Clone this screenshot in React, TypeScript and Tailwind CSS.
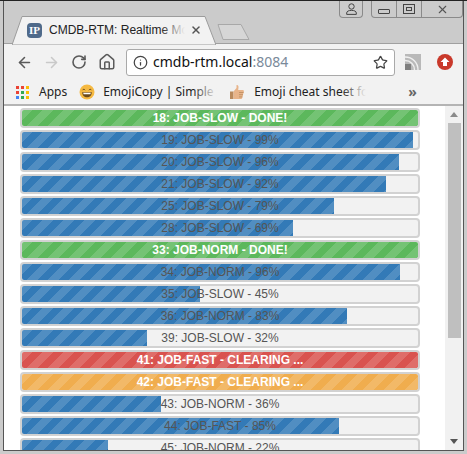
import { ArrowLeft, ArrowRight, House, Info, RotateCw, Star, X } from 'lucide-react'

type Job = {
  label: string
  width: number
  tone: 'blue' | 'green' | 'red' | 'orange'
}

const jobs: Job[] = [
  { label: '18: JOB-SLOW - DONE!', width: 396, tone: 'green' },
  { label: '19: JOB-SLOW - 99%', width: 391, tone: 'blue' },
  { label: '20: JOB-SLOW - 96%', width: 377, tone: 'blue' },
  { label: '21: JOB-SLOW - 92%', width: 364, tone: 'blue' },
  { label: '25: JOB-SLOW - 79%', width: 312, tone: 'blue' },
  { label: '28: JOB-SLOW - 69%', width: 271, tone: 'blue' },
  { label: '33: JOB-NORM - DONE!', width: 396, tone: 'green' },
  { label: '34: JOB-NORM - 96%', width: 378, tone: 'blue' },
  { label: '35: JOB-SLOW - 45%', width: 178, tone: 'blue' },
  { label: '36: JOB-NORM - 83%', width: 325, tone: 'blue' },
  { label: '39: JOB-SLOW - 32%', width: 125, tone: 'blue' },
  { label: '41: JOB-FAST - CLEARING ...', width: 396, tone: 'red' },
  { label: '42: JOB-FAST - CLEARING ...', width: 396, tone: 'orange' },
  { label: '43: JOB-NORM - 36%', width: 139, tone: 'blue' },
  { label: '44: JOB-FAST - 85%', width: 317, tone: 'blue' },
  { label: '45: JOB-NORM - 22%', width: 86, tone: 'blue' },
]

const toneClass = {
  blue: 'bg-[#337ab7]',
  green: 'bg-[#5cb85c]',
  red: 'bg-[#d9534f]',
  orange: 'bg-[#f0ad4e]',
}

function JobRow({ job }: { job: Job }) {
  const done = job.tone !== 'blue'
  return (
    <div className="relative h-5 w-[400px] shrink-0 overflow-hidden rounded border-2 border-[#d2d2d2] bg-[#f2f2f2]">
      <div
        className={`h-full bg-[linear-gradient(135deg,rgba(255,255,255,.15)_25%,transparent_25%,transparent_50%,rgba(255,255,255,.15)_50%,rgba(255,255,255,.15)_75%,transparent_75%,transparent)] bg-[length:21px_21px] ${toneClass[job.tone]}`}
        style={{ width: job.width }}
      />
      <span
        className={`absolute inset-0 flex items-center justify-center text-xs leading-none ${done ? 'font-bold text-white' : 'text-[#555]'}`}
      >
        {job.label}
      </span>
    </div>
  )
}

function Favicon() {
  return (
    <span className="flex h-[15px] w-[15px] items-center justify-center rounded-sm bg-[#4f6a8a] font-['Liberation_Serif',serif] text-[11px] leading-none font-bold text-white">
      IP
    </span>
  )
}

function AppsIcon() {
  const colors = ['#ea4335', '#ea4335', '#fbbc05', '#ea4335', '#34a853', '#fbbc05', '#4285f4', '#34a853', '#fbbc05']
  return (
    <svg width="13" height="13" viewBox="0 0 13 13">
      {colors.map((c, i) => (
        <rect key={i} x={(i % 3) * 5} y={Math.floor(i / 3) * 5} width="3" height="3" fill={c} />
      ))}
    </svg>
  )
}

function GrinIcon() {
  return (
    <svg width="16" height="16" viewBox="0 0 16 16">
      <circle cx="8" cy="8" r="7.5" fill="#f5b942" />
      <path d="M3.5 6.2c.6-1.2 2-1.2 2.6 0M9.9 6.2c.6-1.2 2-1.2 2.6 0" fill="none" stroke="#6b4a1c" strokeWidth="1" />
      <path d="M3.2 8.2h9.6c0 3-2 5-4.8 5s-4.8-2-4.8-5z" fill="#6b4a1c" />
      <path d="M4.2 8.8h7.6l-.4 1.4H4.6z" fill="#fff" />
    </svg>
  )
}

function ThumbIcon() {
  return (
    <svg width="16" height="16" viewBox="0 0 16 16">
      <path d="M1 7.5h3.5V15H1z" fill="#b98a5e" />
      <path d="M4.5 7.5 7.5 4V1.2c1.4-.4 2.2.8 2 2.2L9.2 6h4.6c1 0 1.4 1 1 1.8l-1.5 6c-.2.8-.8 1.2-1.6 1.2H4.5z" fill="#e8b48a" />
      <path d="M10 8.5h4.6M10 10.7h4M10 12.9h3.3" stroke="#b98a5e" strokeWidth="0.8" />
    </svg>
  )
}

function CastIcon() {
  return (
    <svg width="16" height="16" viewBox="0 0 16 16">
      <rect width="16" height="16" fill="#b9b9b9" />
      <rect x="0" y="10" width="6" height="6" fill="#808080" />
      <path d="M0 6.5c5.5 0 9.5 4 9.5 9.5M0 3c7.5 0 13 5.5 13 13" fill="none" stroke="#efefef" strokeWidth="1.4" />
    </svg>
  )
}

function UpdateIcon() {
  return (
    <svg width="16" height="16" viewBox="0 0 16 16">
      <circle cx="8" cy="8" r="8" fill="#c9392b" />
      <path d="M8 3.5 12.5 8H10v4H6V8H3.5z" fill="#fff" />
    </svg>
  )
}

function Tabstrip() {
  return (
    <div className="flex h-[43px] shrink-0 items-start justify-between border-b border-[#a0a0a0] pl-[8px]">
      <div className="flex items-end">
        <div className="relative mt-[15px] h-[28px] w-[204px]">
          <svg className="absolute inset-0" width="204" height="29" viewBox="0 0 204 29">
            <path d="M0 29 10 .5H193L204 29Z" fill="#f2f2f2" stroke="#9c9c9c" />
          </svg>
          <div className="relative flex h-full items-center pl-[15px]">
            <Favicon />
            <div className="relative ml-[7px] w-[136px] overflow-hidden text-xs whitespace-nowrap text-[#222]">
              CMDB-RTM: Realtime Monitor
              <span className="absolute inset-y-0 right-0 w-6 bg-linear-to-r from-transparent to-[#f2f2f2]" />
            </div>
            <X size={12} strokeWidth={3} className="ml-[5px] text-[#555]" />
          </div>
        </div>
        <svg className="-ml-px mb-[4px]" width="36" height="16" viewBox="0 0 36 16">
          <path d="M3 .5H26L34 15.5H8Z" fill="#d6d6d6" stroke="#a8a8a8" />
        </svg>
      </div>
      <div className="flex items-start gap-[8px] text-[#555]">
        <div className="flex h-[17px] w-[24px] items-center justify-center rounded-b border border-t-0 border-[#8a8a8a]">
          <svg width="11" height="12" viewBox="0 0 11 12">
            <circle cx="5.5" cy="3.5" r="2.7" fill="none" stroke="#444" />
            <path d="M.7 11.4V10c0-1.8 2-2.6 4.8-2.6s4.8.8 4.8 2.6v1.4Z" fill="none" stroke="#444" />
          </svg>
        </div>
        <div className="flex h-[17px] w-[92px] rounded-b border border-t-0 border-[#8a8a8a]">
          <div className="flex w-[25px] items-center justify-center border-r border-[#8a8a8a]">
            <span className="mt-[5px] h-[5px] w-[12px] rounded-[1px] border border-[#444]" />
          </div>
          <div className="flex w-[25px] items-center justify-center border-r border-[#8a8a8a]">
            <span className="flex h-[10px] w-[12px] items-center justify-center border border-[#444]">
              <span className="h-[4px] w-[6px] border border-[#444]" />
            </span>
          </div>
          <div className="flex flex-1 items-center justify-center">
            <X size={13} strokeWidth={2} className="text-[#555]" />
          </div>
        </div>
      </div>
    </div>
  )
}

function Toolbar() {
  return (
    <div className="flex h-[36px] shrink-0 items-center bg-[#f2f2f2] pl-[12px]">
      <ArrowLeft size={17} strokeWidth={2.2} className="text-[#5a5a5a]" />
      <ArrowRight size={17} strokeWidth={2.2} className="ml-[10px] text-[#c9c9c9]" />
      <RotateCw size={16} strokeWidth={2.4} className="ml-[11px] text-[#5a5a5a]" />
      <House size={18} strokeWidth={2} className="ml-[11px] text-[#5a5a5a]" />
      <div className="ml-[10px] flex h-[27px] w-[269px] items-center rounded-[3px] border border-[#a9a9a9] bg-white pr-[6px] pl-[6px] text-sm">
        <Info size={15} strokeWidth={2} className="text-[#444]" />
        <span className="ml-[5px] text-[#111]">cmdb-rtm.local</span>
        <span className="text-[#7a8a9a]">:8084</span>
        <Star size={15} strokeWidth={2} className="ml-auto text-[#444]" />
      </div>
      <div className="ml-[10px]">
        <CastIcon />
      </div>
      <div className="ml-[16px]">
        <UpdateIcon />
      </div>
    </div>
  )
}

function Bookmarks() {
  return (
    <div className="flex h-[26px] shrink-0 items-center border-b-2 border-[#b4b4b4] bg-[#f2f2f2] pl-[12px] text-xs text-[#222]">
      <AppsIcon />
      <span className="ml-[10px]">Apps</span>
      <span className="ml-[12px]">
        <GrinIcon />
      </span>
      <div className="relative ml-[8px] w-[114px] overflow-hidden whitespace-nowrap">
        EmojiCopy | Simple emoji
        <span className="absolute inset-y-0 right-0 w-6 bg-linear-to-r from-transparent to-[#f2f2f2]" />
      </div>
      <span className="ml-[12px]">
        <ThumbIcon />
      </span>
      <div className="relative ml-[9px] w-[112px] overflow-hidden whitespace-nowrap">
        Emoji cheat sheet for
        <span className="absolute inset-y-0 right-0 w-6 bg-linear-to-r from-transparent to-[#f2f2f2]" />
      </div>
      <span className="ml-[42px] text-sm leading-none font-bold text-[#666]">»</span>
    </div>
  )
}

function Scrollbar() {
  return (
    <div className="flex w-[18px] shrink-0 flex-col items-center bg-[#f1f1f1]">
      <div className="flex h-[17px] w-full items-center justify-center">
        <svg width="8" height="5" viewBox="0 0 8 5">
          <path d="M4 0 8 5H0Z" fill="#8a8a8a" />
        </svg>
      </div>
      <div className="h-[215px] w-[13px] bg-[#bfbfbf]" />
      <div className="mt-auto flex h-[17px] w-full items-center justify-center">
        <svg width="8" height="5" viewBox="0 0 8 5">
          <path d="M0 0H8L4 5Z" fill="#555" />
        </svg>
      </div>
    </div>
  )
}

export default function App() {
  return (
    <div className="flex h-[454px] w-[467px] flex-col overflow-hidden border-t border-[#222] bg-[#cbcbcb] px-[3px] pb-[3px] font-['Liberation_Sans',Arial,sans-serif]">
      <div className="flex min-h-0 flex-1 flex-col border-x border-b border-[#555]">
        <Tabstrip />
        <div className="flex min-h-0 flex-1 flex-col font-['Noto_Sans',sans-serif]">
          <Toolbar />
          <Bookmarks />
          <div className="flex min-h-0 flex-1 bg-white font-['Liberation_Sans',Arial,sans-serif]">
            <div className="flex min-w-0 flex-1 flex-col gap-[2px] overflow-hidden pt-[2px] pl-[16px]">
              {jobs.map((job) => (
                <JobRow key={job.label} job={job} />
              ))}
            </div>
            <Scrollbar />
          </div>
        </div>
      </div>
    </div>
  )
}
